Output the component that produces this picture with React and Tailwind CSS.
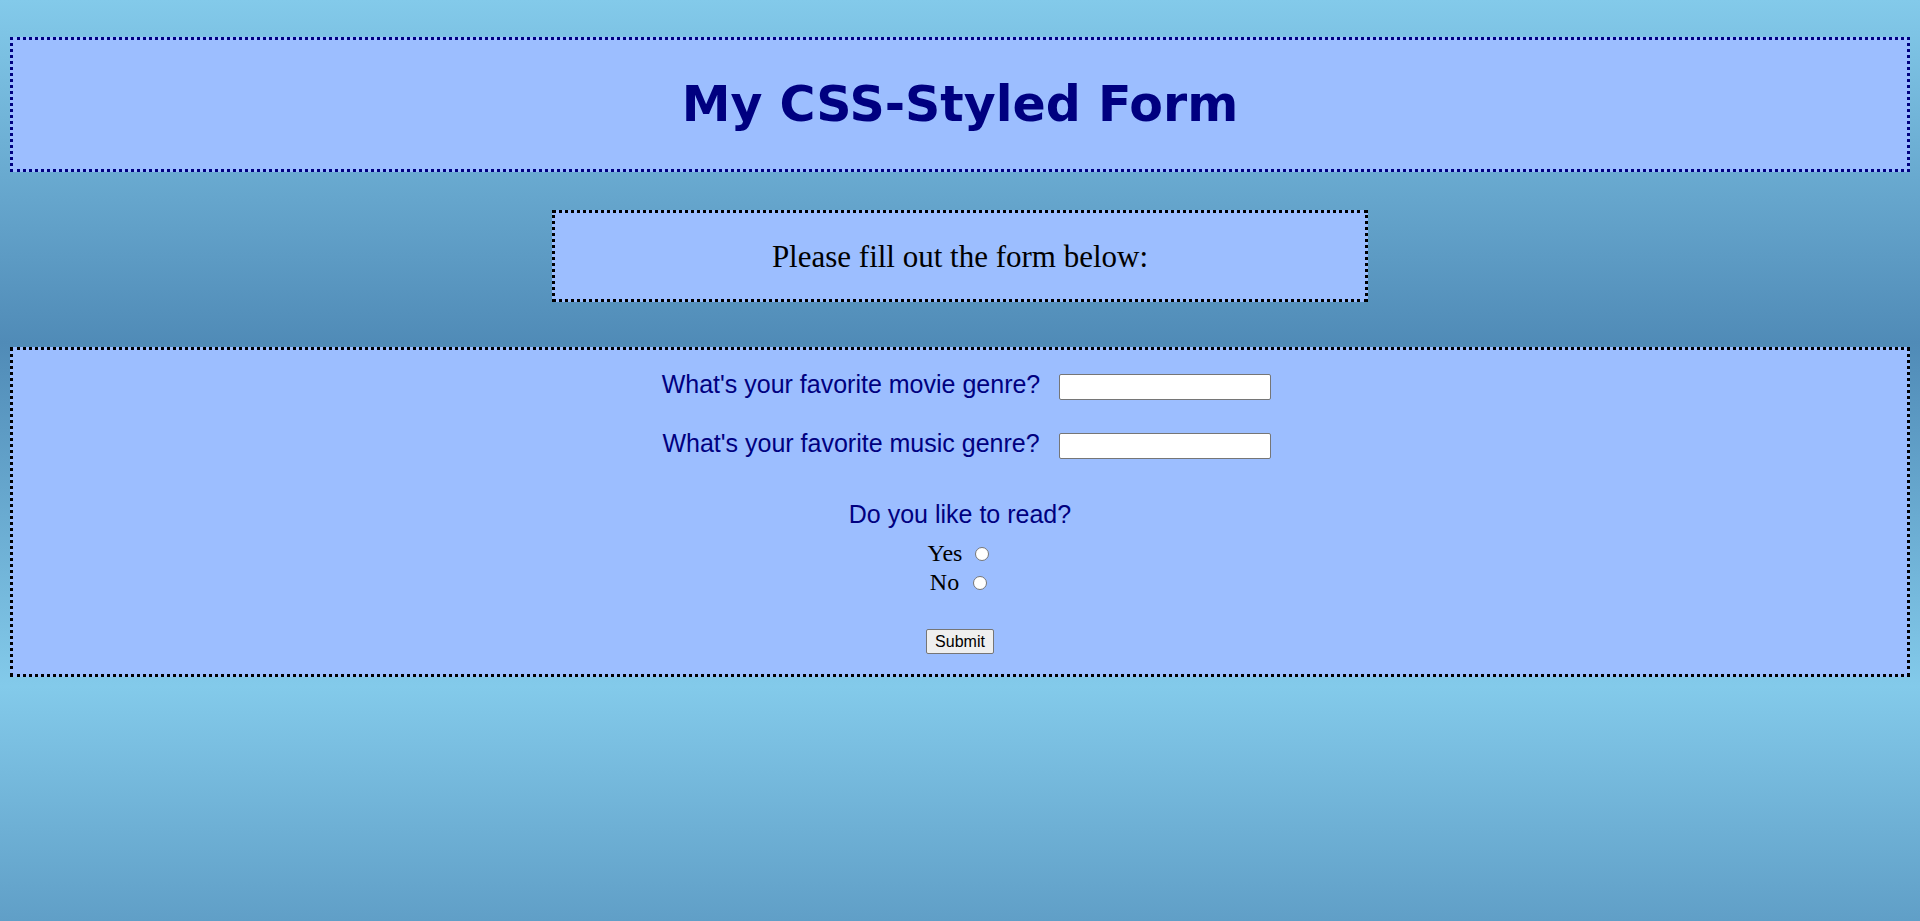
import React from 'react';

const App = () => {
  return (
    <div className="min-h-screen w-full px-[10px] pt-[37px] [background:repeating-linear-gradient(#83caea_0px,#508bb7_343px,#83caea_686px)]">
      {/* Header */}
      <div className="h-[135px] flex items-center justify-center bg-[#9cbeff] border-[3px] border-dotted border-[#000080]">
        <h1 className="text-[49px] leading-none font-bold text-[#000080] font-['DejaVu_Sans',sans-serif]">
          My CSS-Styled Form
        </h1>
      </div>

      {/* Intro */}
      <div className="mt-[38px] mx-auto w-[816px] h-[92px] flex items-center justify-center bg-[#9cbeff] border-[3px] border-dotted border-black">
        <p className="text-[31px] leading-none text-black font-['Liberation_Serif',serif]">
          Please fill out the form below:
        </p>
      </div>

      {/* Form */}
      <form
        onSubmit={(e) => e.preventDefault()}
        className="mt-[45px] h-[330px] flex flex-col items-center bg-[#9cbeff] border-[3px] border-dotted border-black"
      >
        <div className="mt-[24px] h-[26px] w-full flex items-center justify-center gap-[19px] pl-[13px]">
          <label className="mb-[5px] text-[25px] leading-none text-[#000080] font-['Liberation_Sans',Arial,sans-serif]">
            What's your favorite movie genre?
          </label>
          <input
            type="text"
            className="w-[212px] h-[26px] bg-white border border-[#767676] rounded-[2px] px-1 text-[16px] outline-none"
          />
        </div>

        <div className="mt-[33px] h-[26px] w-full flex items-center justify-center gap-[19px] pl-[13px]">
          <label className="mb-[6px] text-[25px] leading-none text-[#000080] font-['Liberation_Sans',Arial,sans-serif]">
            What's your favorite music genre?
          </label>
          <input
            type="text"
            className="w-[212px] h-[26px] bg-white border border-[#767676] rounded-[2px] px-1 text-[16px] outline-none"
          />
        </div>

        <p className="mt-[41px] text-[25px] leading-[29px] text-[#000080] font-['Liberation_Sans',Arial,sans-serif]">
          Do you like to read?
        </p>

        <div className="mt-[10px] flex flex-col items-center font-['Liberation_Serif',serif] text-[24px] leading-[29px] text-black">
          <label className="h-[29px] flex items-center">
            <span>Yes</span>
            <input
              type="radio"
              name="read"
              className="ml-[13px] mr-[3px] w-[14px] h-[14px] appearance-none rounded-full bg-white border border-[#767676]"
            />
          </label>
          <label className="h-[29px] flex items-center">
            <span>No</span>
            <input
              type="radio"
              name="read"
              className="ml-[14px] mr-[3px] w-[14px] h-[14px] appearance-none rounded-full bg-white border border-[#767676]"
            />
          </label>
        </div>

        <button
          type="submit"
          className="mt-[32px] h-[25px] px-[8px] bg-[#efefef] border border-[#767676] rounded-[2px] text-[16px] leading-none text-black font-['Liberation_Sans',Arial,sans-serif]"
        >
          Submit
        </button>
      </form>
    </div>
  );
};

export default App;
